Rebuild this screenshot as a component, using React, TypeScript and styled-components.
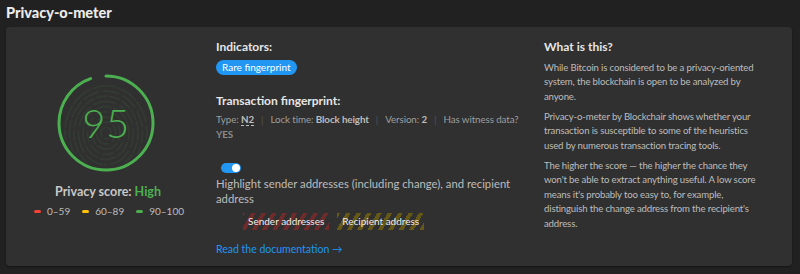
import styled, { createGlobalStyle } from "styled-components";

const GlobalStyle = createGlobalStyle`
  html, body {
    margin: 0;
    padding: 0;
    background: #212121;
    font-family: Lato, "Open Sans", sans-serif;
    color: #c8c8c8;
  }
`;

const Page = styled.div`
  width: 800px;
  height: 274px;
  padding: 4px 8px 0 6px;
  box-sizing: border-box;
  display: flex;
  flex-direction: column;
  gap: 5px;
`;

const Title = styled.h2`
  margin: 0;
  font-size: 14.5px;
  font-weight: 900;
  color: #ececec;
  line-height: 18px;
`;

const Card = styled.div`
  background: #303030;
  border-radius: 4px;
  height: 239px;
  box-sizing: border-box;
  padding: 12px 24px 12px 0;
  display: grid;
  grid-template-columns: 200px 304px 1fr;
  column-gap: 10px;
  box-shadow: 0 1px 2px rgba(0, 0, 0, 0.4);
`;

const ScoreCol = styled.div`
  display: flex;
  flex-direction: column;
  align-items: center;
  justify-content: center;
  padding-bottom: 4px;
`;

const Gauge = styled.div`
  position: relative;
  width: 100px;
  height: 100px;
`;

const GaugeValue = styled.div`
  position: absolute;
  inset: 0;
  display: flex;
  align-items: center;
  justify-content: center;
  font-size: 40px;
  font-weight: 300;
  color: #4caf50;
  letter-spacing: 0.5px;
`;

const ScoreLabel = styled.div`
  margin-top: 11px;
  font-size: 12.5px;
  font-weight: 700;
  color: #c8c8c8;
  padding-left: 4px;

  span {
    color: #4caf50;
  }
`;

const Legend = styled.div`
  margin-top: 6px;
  display: flex;
  gap: 12px;
  font-size: 10px;
  color: #bdbdbd;
  padding-left: 6px;
`;

const LegendItem = styled.div<{ $color: string }>`
  display: flex;
  align-items: center;
  gap: 6px;

  &::before {
    content: "";
    width: 7px;
    height: 3px;
    border-radius: 2px;
    background: ${(p) => p.$color};
  }
`;

const MidCol = styled.div`
  display: flex;
  flex-direction: column;
`;

const Heading = styled.div<{ $gap?: number }>`
  margin-top: ${(p) => p.$gap ?? 0}px;
  font-size: 12px;
  font-weight: 700;
  color: #e6e6e6;
  line-height: 15px;
`;

const Pill = styled.span`
  align-self: flex-start;
  margin-top: 6px;
  background: #2196f3;
  color: #fff;
  font-size: 10px;
  border-radius: 8px;
  padding: 1px 6px 2px;
  line-height: 12px;
`;

const FingerRow = styled.div`
  margin-top: 4px;
  font-size: 9.8px;
  line-height: 15px;
  color: #9e9e9e;
  letter-spacing: -0.1px;

  b {
    color: #bdbdbd;
    font-weight: 700;
  }
`;

const Sep = styled.span`
  color: #555;
  margin: 0 7px;
`;

const Dotted = styled.b`
  border-bottom: 1px dashed #bdbdbd;
`;

const Dim = styled.span`
  color: #8a8a8a;
  font-weight: 700;
`;

const Toggle = styled.div`
  margin-top: 21px;
  margin-left: 5px;
  width: 20px;
  height: 10px;
  border-radius: 5px;
  background: #2196f3;
  position: relative;

  &::after {
    content: "";
    position: absolute;
    right: 1px;
    top: 1px;
    width: 8px;
    height: 8px;
    border-radius: 50%;
    background: #fff;
  }
`;

const HighlightText = styled.div`
  margin-top: 4px;
  font-size: 11.3px;
  line-height: 14.5px;
  color: #bdbdbd;
`;

const MarkRow = styled.div`
  margin-top: 7px;
  margin-left: 27px;
  display: flex;
  gap: 8px;
`;

const Mark = styled.span<{ $tone: string }>`
  font-size: 10px;
  color: #eee;
  padding: 3px 5px 3px;
  line-height: 11px;
  background: repeating-linear-gradient(
    -60deg,
    ${(p) => p.$tone} 0 4px,
    transparent 4px 9px
  );
`;

const DocLink = styled.a`
  margin-top: 13px;
  font-size: 10.5px;
  color: #2196f3;
  text-decoration: none;
  align-self: flex-start;
`;

const InfoCol = styled.div`
  display: flex;
  flex-direction: column;
  padding-left: 14px;
`;

const Para = styled.p<{ $gap?: number }>`
  margin: ${(p) => p.$gap ?? 5.5}px 0 0;
  font-size: 9.6px;
  letter-spacing: -0.15px;
  line-height: 14.5px;
  color: #bdbdbd;
`;

// faint fingerprint whorl behind the score
const Fingerprint = () => {
  const rings = [5, 9.5, 14, 18.5, 23, 27.5, 32, 36.5, 41];
  return (
    <g
      stroke="rgba(76, 175, 80, 0.08)"
      strokeWidth="2"
      fill="none"
      strokeLinecap="round"
      clipPath="url(#inner)"
    >
      {rings.map((r, i) => (
        <ellipse
          key={r}
          cx="50"
          cy="60"
          rx={r}
          ry={r * 1.15}
          strokeDasharray={`${10 + (i % 3) * 6} ${3 + (i % 2) * 2}`}
          strokeDashoffset={i * 7}
        />
      ))}
    </g>
  );
};

export default function App() {
  const circ = 2 * Math.PI * 47;
  return (
    <>
      <GlobalStyle />
      <Page>
        <Title>Privacy-o-meter</Title>
        <Card>
          <ScoreCol>
            <Gauge>
              <svg width="100" height="100" viewBox="0 0 100 100">
                <defs>
                  <clipPath id="inner">
                    <circle cx="50" cy="50" r="44" />
                  </clipPath>
                </defs>
                <Fingerprint />
                <circle
                  cx="50"
                  cy="50"
                  r="47"
                  fill="none"
                  stroke="#4caf50"
                  strokeWidth="3"
                  strokeLinecap="round"
                  strokeDasharray={`${circ * 0.945} ${circ}`}
                  transform="rotate(-90 50 50)"
                />
              </svg>
              <GaugeValue>95</GaugeValue>
            </Gauge>
            <ScoreLabel>
              Privacy score: <span>High</span>
            </ScoreLabel>
            <Legend>
              <LegendItem $color="#f44336">0–59</LegendItem>
              <LegendItem $color="#ffc107">60–89</LegendItem>
              <LegendItem $color="#4caf50">90–100</LegendItem>
            </Legend>
          </ScoreCol>

          <MidCol>
            <Heading>Indicators:</Heading>
            <Pill>Rare fingerprint</Pill>
            <Heading $gap={18}>Transaction fingerprint:</Heading>
            <FingerRow>
              Type: <Dotted>N2</Dotted>
              <Sep>|</Sep>Lock time: <b>Block height</b>
              <Sep>|</Sep>Version: <b>2</b>
              <Sep>|</Sep>Has witness data? <Dim>YES</Dim>
            </FingerRow>
            <Toggle />
            <HighlightText>
              Highlight sender addresses (including change), and recipient address
            </HighlightText>
            <MarkRow>
              <Mark $tone="rgba(150, 40, 40, 0.6)">Sender addresses</Mark>
              <Mark $tone="rgba(130, 110, 10, 0.65)">Recipient address</Mark>
            </MarkRow>
            <DocLink href="#">Read the documentation →</DocLink>
          </MidCol>

          <InfoCol>
            <Heading>What is this?</Heading>
            <Para $gap={6.5}>
              While Bitcoin is considered to be a privacy-oriented system, the
              blockchain is open to be analyzed by anyone.
            </Para>
            <Para>
              Privacy-o-meter by Blockchair shows whether your transaction is
              susceptible to some of the heuristics used by numerous transaction
              tracing tools.
            </Para>
            <Para>
              The higher the score — the higher the chance they won't be able to
              extract anything useful. A low score means it's probably too easy
              to, for example, distinguish the change address from the
              recipient's address.
            </Para>
          </InfoCol>
        </Card>
      </Page>
    </>
  );
}
